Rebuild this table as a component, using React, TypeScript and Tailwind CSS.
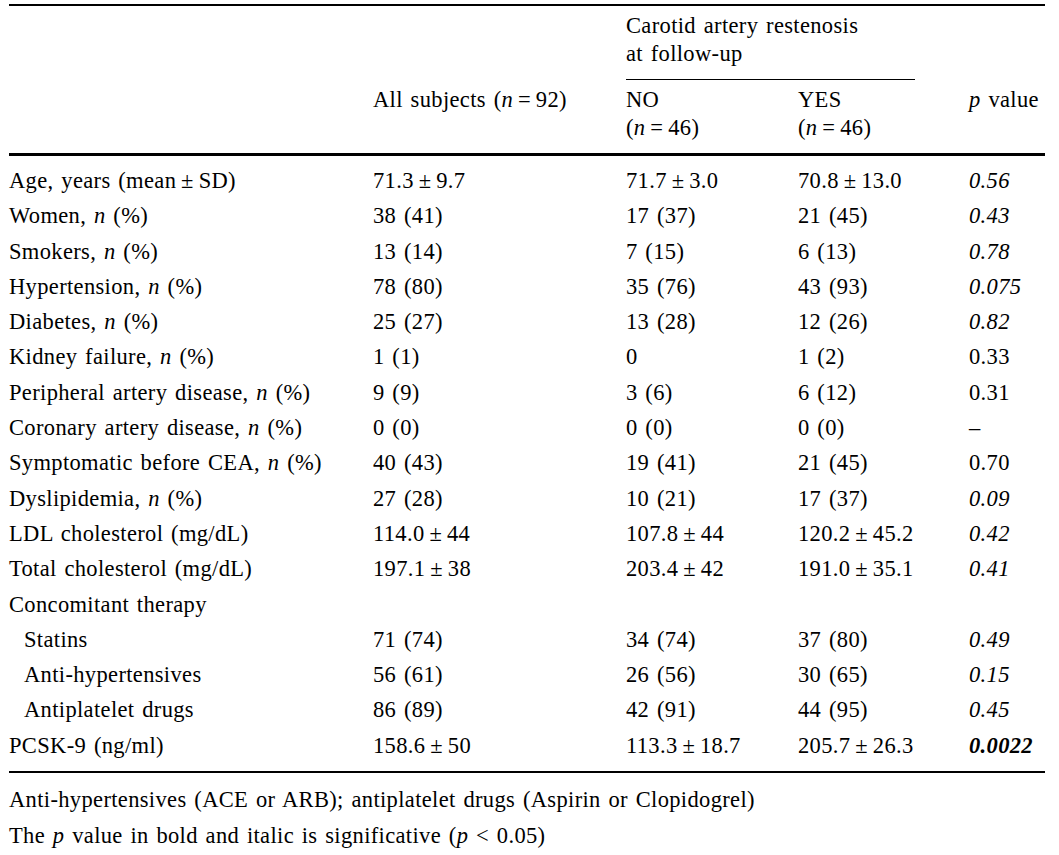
import React from "react";

type Row = {
  label: React.ReactNode;
  all: string;
  no: string;
  yes: string;
  p: string;
  pStyle?: "italic" | "normal" | "bold";
  indent?: boolean;
};

const n = <i>n</i>;
const pm = (a: string, b: string) => `${a}\u2009±\u2009${b}`;

const rows: Row[] = [
  { label: "Age, years (mean\u2009±\u2009SD)", all: pm("71.3", "9.7"), no: pm("71.7", "3.0"), yes: pm("70.8", "13.0"), p: "0.56", pStyle: "italic" },
  { label: <>Women, {n} (%)</>, all: "38 (41)", no: "17 (37)", yes: "21 (45)", p: "0.43", pStyle: "italic" },
  { label: <>Smokers, {n} (%)</>, all: "13 (14)", no: "7 (15)", yes: "6 (13)", p: "0.78", pStyle: "italic" },
  { label: <>Hypertension, {n} (%)</>, all: "78 (80)", no: "35 (76)", yes: "43 (93)", p: "0.075", pStyle: "italic" },
  { label: <>Diabetes, {n} (%)</>, all: "25 (27)", no: "13 (28)", yes: "12 (26)", p: "0.82", pStyle: "italic" },
  { label: <>Kidney failure, {n} (%)</>, all: "1 (1)", no: "0", yes: "1 (2)", p: "0.33", pStyle: "normal" },
  { label: <>Peripheral artery disease, {n} (%)</>, all: "9 (9)", no: "3 (6)", yes: "6 (12)", p: "0.31", pStyle: "normal" },
  { label: <>Coronary artery disease, {n} (%)</>, all: "0 (0)", no: "0 (0)", yes: "0 (0)", p: "–", pStyle: "normal" },
  { label: <>Symptomatic before CEA, {n} (%)</>, all: "40 (43)", no: "19 (41)", yes: "21 (45)", p: "0.70", pStyle: "normal" },
  { label: <>Dyslipidemia, {n} (%)</>, all: "27 (28)", no: "10 (21)", yes: "17 (37)", p: "0.09", pStyle: "italic" },
  { label: "LDL cholesterol (mg/dL)", all: pm("114.0", "44"), no: pm("107.8", "44"), yes: pm("120.2", "45.2"), p: "0.42", pStyle: "italic" },
  { label: "Total cholesterol (mg/dL)", all: pm("197.1", "38"), no: pm("203.4", "42"), yes: pm("191.0", "35.1"), p: "0.41", pStyle: "italic" },
  { label: "Concomitant therapy", all: "", no: "", yes: "", p: "" },
  { label: "Statins", all: "71 (74)", no: "34 (74)", yes: "37 (80)", p: "0.49", pStyle: "italic", indent: true },
  { label: "Anti-hypertensives", all: "56 (61)", no: "26 (56)", yes: "30 (65)", p: "0.15", pStyle: "italic", indent: true },
  { label: "Antiplatelet drugs", all: "86 (89)", no: "42 (91)", yes: "44 (95)", p: "0.45", pStyle: "italic", indent: true },
  { label: "PCSK-9 (ng/ml)", all: pm("158.6", "50"), no: pm("113.3", "18.7"), yes: pm("205.7", "26.3"), p: "0.0022", pStyle: "bold" },
];

const cols = "grid grid-cols-[364px_253px_172px_171px_1fr]";

export default function App() {
  return (
    <div
      className="min-h-screen bg-white text-black text-[22.5px] tracking-[0.35px] [word-spacing:1.8px]"
      style={{ fontFamily: '"Liberation Serif", "Times New Roman", serif' }}
    >
      <div className="ml-[9px] w-[1036px] pt-[4px]">
        {/* top rule */}
        <div className="h-[2px] bg-black" />

        {/* header */}
        <div className={`${cols} leading-[28px]`}>
          <div className="col-start-3 col-span-2 pt-[6px]">
            <div>Carotid artery restenosis</div>
            <div>at follow-up</div>
            <div className="mt-[11px] h-[1px] w-[289px] bg-black" />
          </div>
          <div className="col-start-2 row-start-2 pt-[6px]">
            All subjects (<i>n</i>{"\u2009=\u2009"}92)
          </div>
          <div className="col-start-3 row-start-2 pt-[6px]">
            <div>NO</div>
            <div>(<i>n</i>{"\u2009=\u2009"}46)</div>
          </div>
          <div className="col-start-4 row-start-2 pt-[6px]">
            <div>YES</div>
            <div>(<i>n</i>{"\u2009=\u2009"}46)</div>
          </div>
          <div className="col-start-5 row-start-2 pt-[6px]">
            <i>p</i> value
          </div>
        </div>

        {/* header rule */}
        <div className="mt-[11px] h-[3px] bg-black" />

        {/* body */}
        <div className="pt-[7px] pb-[8px]">
          {rows.map((r, i) => (
            <div key={i} className={`${cols} h-[35.3px] leading-[35.3px] whitespace-nowrap`}>
              <div className={r.indent ? "pl-[15px]" : ""}>{r.label}</div>
              <div>{r.all}</div>
              <div>{r.no}</div>
              <div>{r.yes}</div>
              <div
                className={
                  r.pStyle === "italic"
                    ? "italic"
                    : r.pStyle === "bold"
                    ? "italic font-bold"
                    : ""
                }
              >
                {r.p}
              </div>
            </div>
          ))}
        </div>

        {/* bottom rule */}
        <div className="h-[2px] bg-black" />

        {/* footnotes */}
        <div className="pt-[9px] leading-[36px]">
          <p>Anti-hypertensives (ACE or ARB); antiplatelet drugs (Aspirin or Clopidogrel)</p>
          <p>
            The <i>p</i> value in bold and italic is significative (<i>p</i> &lt; 0.05)
          </p>
        </div>
      </div>
    </div>
  );
}
